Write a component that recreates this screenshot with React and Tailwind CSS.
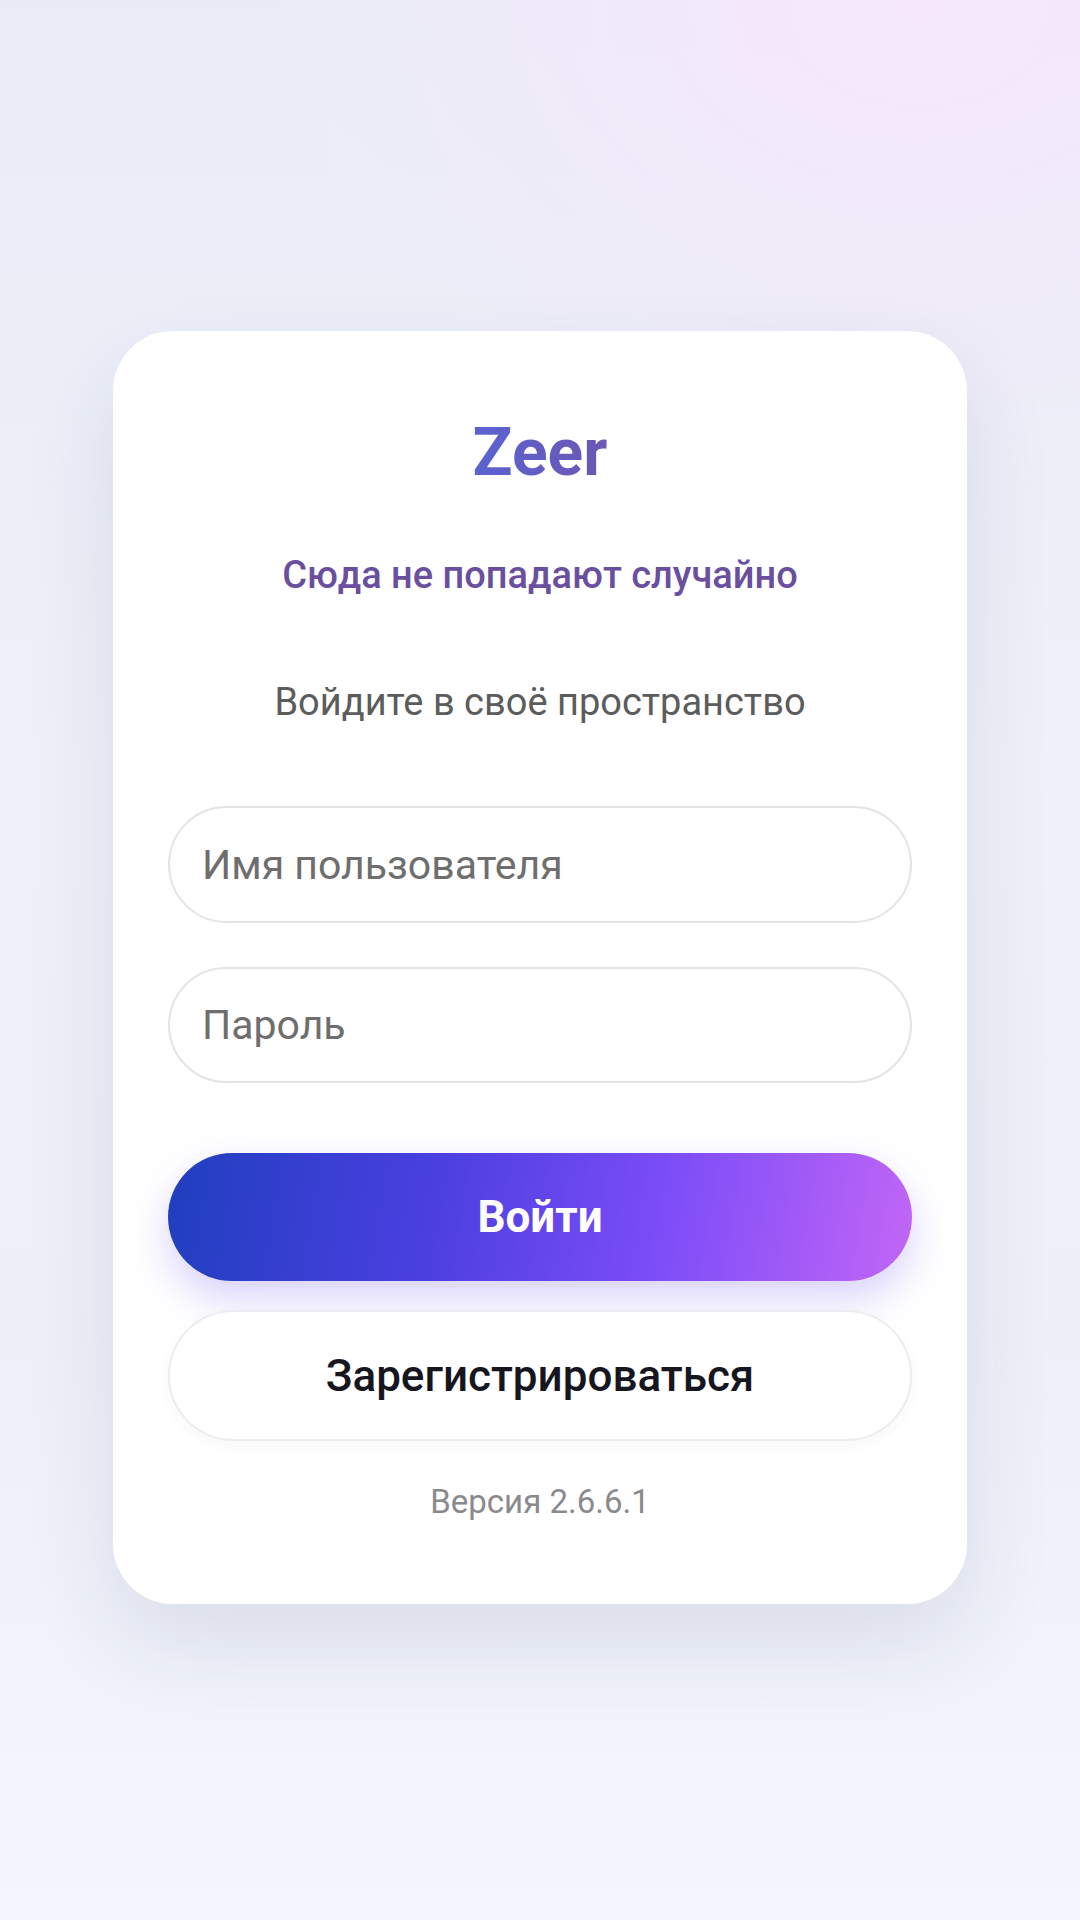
import React, { useState } from 'react';

const font = { fontFamily: 'Roboto, "Noto Sans", sans-serif' };

const App = () => {
    const [username, setUsername] = useState('');
    const [password, setPassword] = useState('');

    return (
        <div
            style={font}
            className="min-h-[1920px] w-full bg-[radial-gradient(ellipse_60%_25%_at_85%_0%,#f6e7fc_0%,rgba(246,231,252,0)_100%),linear-gradient(180deg,#e9ecf7_0%,#eff1f8_40%,#eef0f8_70%,#f3f6fd_100%)] pt-[331px]"
        >
            <div className="mx-auto flex w-[854px] flex-col items-center rounded-[60px] bg-white px-[55px] pt-[89px] pb-[82px] shadow-[0_40px_90px_rgba(40,50,100,0.11)]">
                {/* LOGO */}
                <h1 className="bg-[linear-gradient(90deg,#5a63d2,#6c57b3)] bg-clip-text text-[66px] font-bold leading-[66px] text-transparent">
                    Zeer
                </h1>

                <p className="mt-[67px] text-[38px] font-medium leading-[44px] text-[#6b4f9f]">
                    Сюда не попадают случайно
                </p>

                <p className="mt-[83px] text-[38px] leading-[44px] text-[#5c5c5c]">
                    Войдите в своё пространство
                </p>

                {/* FORM */}
                <input
                    type="text"
                    placeholder="Имя пользователя"
                    value={username}
                    onChange={(e) => setUsername(e.target.value)}
                    className="mt-[82px] h-[117px] w-full rounded-full border-2 border-[#e3e3e8] bg-white px-[32px] text-[41px] text-[#333] outline-none placeholder:text-[#6e6e6e]"
                />

                <input
                    type="password"
                    placeholder="Пароль"
                    value={password}
                    onChange={(e) => setPassword(e.target.value)}
                    className="mt-[44px] h-[116px] w-full rounded-full border-2 border-[#e3e3e8] bg-white px-[32px] text-[41px] text-[#333] outline-none placeholder:text-[#6e6e6e]"
                />

                <button
                    type="button"
                    className="mt-[70px] h-[128px] w-full rounded-full bg-[linear-gradient(100deg,#1f3fbe_0%,#4a3fe0_35%,#7a4cf8_65%,#c266f6_100%)] text-[44px] font-bold text-white shadow-[0_18px_40px_rgba(120,95,240,0.28)]"
                >
                    Войти
                </button>

                <button
                    type="button"
                    className="mt-[29px] h-[131px] w-full rounded-full border-2 border-[#ececf1] bg-white text-[44px] font-medium text-[#16161f] shadow-[0_4px_14px_rgba(40,50,100,0.04)]"
                >
                    Зарегистрироваться
                </button>

                <p className="mt-[41px] text-[33px] leading-[40px] text-[#8a8a8d]">
                    Версия 2.6.6.1
                </p>
            </div>
        </div>
    );
};

export default App;
